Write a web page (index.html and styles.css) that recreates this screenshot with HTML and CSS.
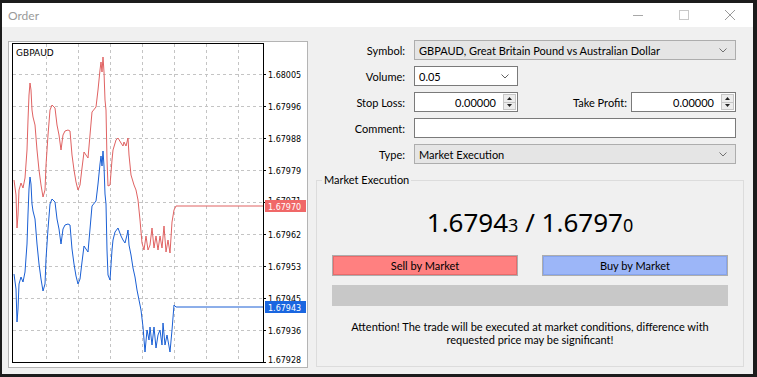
FILE: index.html
```html
<!DOCTYPE html>
<html>
<head>
<meta charset="utf-8">
<link rel="stylesheet" href="styles.css">
</head>
<body>
<div class="window">
  <div class="titlebar">
    <span class="title">Order</span>
    <div class="ctl"><svg width="10" height="10" viewBox="0 0 10 10"><path d="M0 5.5H10" stroke="#a8a8a8" stroke-width="1"/></svg></div>
    <div class="ctl"><svg width="10" height="10" viewBox="0 0 10 10"><rect x="0.5" y="0.5" width="9" height="9" fill="none" stroke="#c8c8c8"/></svg></div>
    <div class="ctl"><svg width="10" height="10" viewBox="0 0 10 10"><path d="M0 0L10 10M10 0L0 10" stroke="#9a9a9a" stroke-width="1"/></svg></div>
  </div>
  <div class="main">
    <div class="chart">
      <svg width="300" height="327" viewBox="0 0 300 327">
        <g transform="translate(-8,-41)">
          <rect x="8.5" y="41.5" width="299" height="326" fill="#fff" stroke="#b4b4b4"/>
          <g stroke="#c4c4c4" stroke-dasharray="3 3" stroke-width="1">
            <path d="M46.5 44V363M78.5 44V363M110.5 44V363M142.5 44V363M174.5 44V363M206.5 44V363M238.5 44V363"/>
            <path d="M13 74.5H263M13 106.5H263M13 138.5H263M13 170.5H263M13 202.5H263M13 234.5H263M13 266.5H263M13 298.5H263M13 330.5H263"/>
          </g>
          <g stroke="#000">
            <path d="M263 74.5H266M263 106.5H266M263 138.5H266M263 170.5H266M263 202.5H266M263 234.5H266M263 266.5H266M263 298.5H266M263 330.5H266M263 362.5H266"/>
          </g>
          <polyline fill="none" stroke="#e06262" stroke-width="1" points="14,180 16,195 17,228 18,215 19,190 21,183 23,188 25,178 27,150 28,120 29,95 30,83 31,90 32,110 33,117 35,125 37,150 39,170 41,185 43,197 45,190 46,165 48,135 50,110 52,105 55,108 57,125 59,135 61,150 63,135 65,131 68,130 70,131 72,155 74,170 76,182 78,190 80,185 82,168 84,152 86,155 88,158 90,135 92,112 96,107 98,90 100,70 101,62 102,72 103,57 104,72 105,100 106,110 107,160 108,186 110,185 112,160 113,150 116,140 118,138 121,143 123,146 124,142 126,146 128,138 129,155 131,175 134,185 136,190 138,200 140,220 142,243 144,250 146,236 148,250 150,245 152,228 154,248 156,236 158,250 160,236 162,248 164,226 166,252 168,240 170,253 172,222 174,210 176,206 263,206"/>
          <polyline fill="none" stroke="#1a5fd4" stroke-width="1" points="14,274 16,289 17,322 18,309 19,284 21,277 23,282 25,272 27,244 28,214 29,189 30,177 31,184 32,204 33,211 35,219 37,244 39,264 41,279 43,291 45,284 46,259 48,229 50,204 52,199 55,202 57,219 59,229 61,244 63,229 65,225 68,224 70,225 72,249 74,264 76,276 78,284 80,279 82,262 84,246 86,249 88,252 90,229 92,206 96,201 98,184 100,164 101,156 102,166 103,151 104,166 105,194 106,204 107,250 108,275 110,280 112,250 113,240 115,232 118,228 121,236 123,240 125,243 127,235 128,230 129,245 131,255 133,268 135,277 137,290 139,300 141,310 143,327 145,352 147,330 149,340 150,327 152,345 154,327 156,348 158,335 160,330 162,345 163,323 165,345 167,335 170,352 172,330 174,305 176,307 263,307"/>
          <rect x="12.5" y="43.5" width="251" height="319" fill="none" stroke="#000"/>
          <text class="ctitle" x="16" y="56">GBPAUD</text>
          <g class="axis">
            <text x="268" y="78">1.68005</text>
            <text x="268" y="110">1.67996</text>
            <text x="268" y="142">1.67988</text>
            <text x="268" y="174">1.67979</text>
            <text x="268" y="204">1.67971</text>
            <text x="268" y="238">1.67962</text>
            <text x="268" y="270">1.67953</text>
            <text x="268" y="302">1.67945</text>
            <text x="268" y="334">1.67936</text>
            <text x="268" y="363">1.67928</text>
          </g>
          <rect x="265" y="200" width="41" height="12" fill="#f06868"/>
          <text class="tag" x="268" y="210">1.67970</text>
          <rect x="265" y="301" width="41" height="12" fill="#1a66e0"/>
          <text class="tag" x="268" y="311">1.67943</text>
        </g>
      </svg>
    </div>
    <div class="side">
      <div class="form">
        <span class="lbl">Symbol:</span>
        <div class="combo grey"><span>GBPAUD, Great Britain Pound vs Australian Dollar</span><svg class="chev" width="8" height="5" viewBox="0 0 8 5"><path d="M0.5 0.5L4 4L7.5 0.5" fill="none" stroke="#707070"/></svg></div>
        <span class="lbl">Volume:</span>
        <div class="combo white vol"><span>0.05</span><svg class="chev" width="8" height="5" viewBox="0 0 8 5"><path d="M0.5 0.5L4 4L7.5 0.5" fill="none" stroke="#606060"/></svg></div>
        <span class="lbl">Stop Loss:</span>
        <div class="pair">
          <div class="spin sl"><span class="val">0.00000</span><span class="arrows"><span class="up"><svg width="5" height="3" viewBox="0 0 5 3"><path d="M2.5 0L5 3H0Z" fill="#222"/></svg></span><span class="dn"><svg width="5" height="3" viewBox="0 0 5 3"><path d="M0 0H5L2.5 3Z" fill="#222"/></svg></span></span></div>
          <span class="lbl tp">Take Profit:</span>
          <div class="spin tpbox"><span class="val">0.00000</span><span class="arrows"><span class="up"><svg width="5" height="3" viewBox="0 0 5 3"><path d="M2.5 0L5 3H0Z" fill="#222"/></svg></span><span class="dn"><svg width="5" height="3" viewBox="0 0 5 3"><path d="M0 0H5L2.5 3Z" fill="#222"/></svg></span></span></div>
        </div>
        <span class="lbl">Comment:</span>
        <div class="input"></div>
        <span class="lbl">Type:</span>
        <div class="combo grey"><span>Market Execution</span><svg class="chev" width="8" height="5" viewBox="0 0 8 5"><path d="M0.5 0.5L4 4L7.5 0.5" fill="none" stroke="#707070"/></svg></div>
      </div>
      <fieldset class="group">
        <legend>Market Execution</legend>
        <div class="price">1.6794<span class="small">3</span> / 1.6797<span class="small">0</span></div>
        <div class="buttons">
          <div class="btn sell">Sell by Market</div>
          <div class="btn buy">Buy by Market</div>
        </div>
        <div class="bar"></div>
        <p class="note">Attention! The trade will be executed at market conditions, difference with<br>requested price may be significant!</p>
      </fieldset>
    </div>
  </div>
</div>
</body>
</html>
```
FILE: styles.css
```css
* { box-sizing: border-box; }
body {
  margin: 0;
  padding: 3px 0 0 2px;
  background: #1c1c1c;
  font-family: Lato, "Noto Sans", sans-serif;
  font-size: 11px;
  color: #000;
  height: 377px;
  overflow: hidden;
}
.window {
  width: 751px;
  height: 371px;
  background: #f0f0f0;
  display: flex;
  flex-direction: column;
}
.titlebar {
  height: 24px;
  background: #fff;
  display: flex;
  align-items: center;
}
.title {
  flex: 1;
  padding-left: 6px;
  color: #9a9a9a;
  font-size: 12px;
}
.ctl {
  width: 46px;
  height: 24px;
  display: flex;
  align-items: center;
  justify-content: center;
}
.main {
  display: flex;
  align-items: flex-start;
  padding: 13px 0 0 6px;
}
.chart {
  margin-top: 1px;
  width: 300px;
  height: 327px;
}
.chart svg { display: block; }
.ctitle { font-family: "DejaVu Sans", sans-serif; font-size: 9px; fill: #000; }
.axis text { font-family: "DejaVu Sans", sans-serif; font-size: 8px; fill: #000; }
.tag { font-family: "DejaVu Sans", sans-serif; font-size: 8px; fill: #fff; }
.side {
  margin-left: 8px;
  width: 428px;
}
.form {
  display: grid;
  grid-template-columns: 89px 322px;
  grid-auto-rows: 20px;
  column-gap: 9px;
  row-gap: 6px;
}
.lbl {
  text-align: right;
  align-self: center;
  white-space: nowrap;
}
.combo {
  display: flex;
  align-items: center;
  justify-content: space-between;
  padding: 0 8px 0 4px;
  border: 1px solid #adadad;
  white-space: nowrap;
}
.combo.grey { background: #e5e5e5; }
.combo.white { background: #fff; border-color: #7a7a7a; }
.combo.vol { width: 104px; }
.pair {
  display: flex;
  align-items: stretch;
}
.spin {
  display: flex;
  background: #fff;
  border: 1px solid #7a7a7a;
}
.spin.sl { width: 104px; }
.spin.tpbox { width: 105px; }
.val {
  flex: 1;
  text-align: right;
  padding-right: 6px;
  align-self: center;
}
.arrows {
  width: 13px;
  margin: 1px;
  display: flex;
  flex-direction: column;
  border: 1px solid #c6c6c6;
  background: #ececec;
}
.arrows span {
  flex: 1;
  display: flex;
  align-items: center;
  justify-content: center;
}
.arrows .up { border-bottom: 1px solid #c6c6c6; }
.lbl.tp {
  flex: 1;
  padding-right: 4px;
}
.input {
  background: #fff;
  border: 1px solid #7a7a7a;
}
.group {
  margin: 8px 0 0 0;
  padding: 0;
  width: 428px;
  height: 195px;
  border: 1px solid #dcdcdc;
  min-width: 0;
}
.group legend {
  margin-left: 5px;
  padding: 0 2px;
  line-height: 16px;
}
.price {
  margin-top: 19px;
  height: 30px;
  line-height: 30px;
  text-align: center;
  font-family: "Noto Sans", sans-serif;
  font-size: 26px;
}
.price .small { font-size: 18px; }
.buttons {
  margin-top: 18px;
  padding: 0 15px;
  display: flex;
  justify-content: space-between;
}
.btn {
  width: 186px;
  height: 21px;
  border: 1px solid #adadad;
  display: flex;
  align-items: center;
  justify-content: center;
}
.sell { background: #ff8080; box-shadow: inset 0 0 0 1px #e86a6a; }
.buy { background: #9cb6f8; box-shadow: inset 0 0 0 1px #86a4ee; }
.bar {
  margin: 9px 15px 0;
  height: 21px;
  background: #c8c8c8;
}
.note {
  margin: 14px 0 0;
  text-align: center;
  line-height: 13px;
}
```
